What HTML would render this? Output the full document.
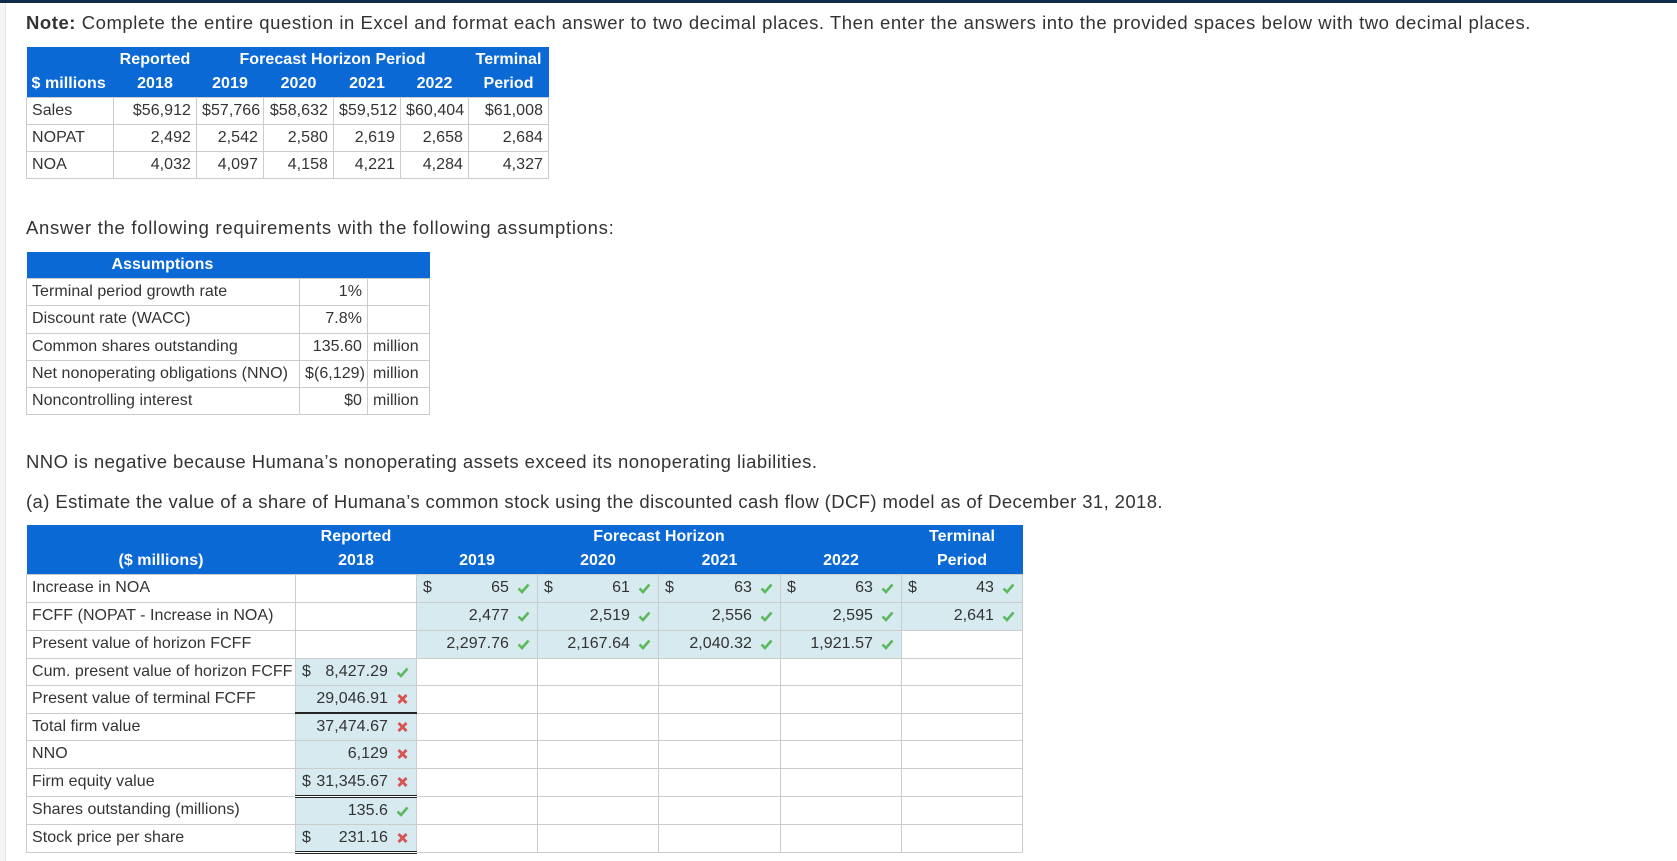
<!DOCTYPE html>
<html><head><meta charset="utf-8">
<style>
*{margin:0;padding:0;box-sizing:border-box}
body{width:1677px;height:861px;overflow:hidden;background:#fff;font-family:"Liberation Sans",sans-serif;color:#333;position:relative}
.top{position:absolute;left:0;top:0;width:1677px;height:3px;background:#0f2b4b}
.side{position:absolute;left:0;top:3px;width:6px;height:858px;background:#f4f5f7;border-right:1px solid #e2e4e8}
.t{position:absolute;white-space:nowrap}
table{position:absolute;border-collapse:collapse;table-layout:fixed;font-size:16px;letter-spacing:0.05px}
td{border:1px solid #ccc;padding:0 5px;white-space:nowrap;position:relative}
th{background:#0b69d6;color:#fff;font-weight:bold;padding:0 5px;white-space:nowrap;border:none}
.r{text-align:right}
.c{text-align:center}
.b{background:#d6eaf0}
.v{position:absolute;right:28px;top:50%;transform:translateY(-50%)}
.d{position:absolute;left:6px;top:50%;transform:translateY(-50%)}
.i{position:absolute;right:7px;top:50%;transform:translateY(-50%);width:13px;height:13px}
.ul{border-bottom:2px solid #222}
.dbl{border-bottom:3px double #222}
</style></head><body>
<div class="top"></div><div class="side"></div>
<div class="t" style="left:26px;top:12px;font-size:18.5px;letter-spacing:0.55px"><b>Note:</b> Complete the entire question in Excel and format each answer to two decimal places. Then enter the answers into the provided spaces below with two decimal places.</div>

<table style="left:26px;top:47px;width:522px">
<colgroup><col style="width:87px"><col style="width:83px"><col style="width:67px"><col style="width:70px"><col style="width:67px"><col style="width:68px"><col style="width:80px"></colgroup>
<tr style="height:25px"><th></th><th class="c">Reported</th><th colspan="4" class="c">Forecast Horizon Period</th><th class="c">Terminal</th></tr>
<tr style="height:25px"><th style="text-align:left">$ millions</th><th class="c">2018</th><th class="c">2019</th><th class="c">2020</th><th class="c">2021</th><th class="c">2022</th><th class="c">Period</th></tr>
<tr style="height:27px"><td>Sales</td><td class="r">$56,912</td><td class="r">$57,766</td><td class="r">$58,632</td><td class="r">$59,512</td><td class="r">$60,404</td><td class="r">$61,008</td></tr>
<tr style="height:27px"><td>NOPAT</td><td class="r">2,492</td><td class="r">2,542</td><td class="r">2,580</td><td class="r">2,619</td><td class="r">2,658</td><td class="r">2,684</td></tr>
<tr style="height:27px"><td>NOA</td><td class="r">4,032</td><td class="r">4,097</td><td class="r">4,158</td><td class="r">4,221</td><td class="r">4,284</td><td class="r">4,327</td></tr>
</table>

<div class="t" style="left:26px;top:217px;font-size:18.5px;letter-spacing:0.7px">Answer the following requirements with the following assumptions:</div>

<table style="left:26px;top:252px;width:403px">
<colgroup><col style="width:273px"><col style="width:68px"><col style="width:62px"></colgroup>
<tr style="height:26px"><th colspan="3" style="text-align:left;padding-left:85px">Assumptions</th></tr>
<tr style="height:27px"><td>Terminal period growth rate</td><td class="r">1%</td><td></td></tr>
<tr style="height:28px"><td>Discount rate (WACC)</td><td class="r">7.8%</td><td></td></tr>
<tr style="height:27px"><td>Common shares outstanding</td><td class="r">135.60</td><td>million</td></tr>
<tr style="height:27px"><td>Net nonoperating obligations (NNO)</td><td class="r">$(6,129)</td><td>million</td></tr>
<tr style="height:27px"><td>Noncontrolling interest</td><td class="r">$0</td><td>million</td></tr>
</table>

<div class="t" style="left:26px;top:451px;font-size:18.5px;letter-spacing:0.45px">NNO is negative because Humana’s nonoperating assets exceed its nonoperating liabilities.</div>
<div class="t" style="left:26px;top:491px;font-size:18.5px;letter-spacing:0.4px">(a) Estimate the value of a share of Humana’s common stock using the discounted cash flow (DCF) model as of December 31, 2018.</div>

<svg width="0" height="0" style="position:absolute"><defs>
<symbol id="ck" viewBox="0 0 13 13"><path d="M1.5 7 L5 10.5 L11.5 3" fill="none" stroke="#5cb85c" stroke-width="2.6"/></symbol>
<symbol id="x" viewBox="0 0 13 13"><path d="M2.5 2.5 L10.5 10.5 M10.5 2.5 L2.5 10.5" fill="none" stroke="#d9534f" stroke-width="2.8"/></symbol>
</defs></svg>

<table style="left:26px;top:525px;width:996px">
<colgroup><col style="width:269px"><col style="width:121px"><col style="width:121px"><col style="width:121px"><col style="width:122px"><col style="width:121px"><col style="width:121px"></colgroup>
<tr style="height:24px"><th></th><th class="c">Reported</th><th colspan="4" class="c">Forecast Horizon</th><th class="c">Terminal</th></tr>
<tr style="height:25px"><th class="c">($ millions)</th><th class="c">2018</th><th class="c">2019</th><th class="c">2020</th><th class="c">2021</th><th class="c">2022</th><th class="c">Period</th></tr>
<tr style="height:28px"><td>Increase in NOA</td><td></td>
<td class="b"><span class="d">$</span><span class="v">65</span><svg class="i"><use href="#ck"/></svg></td>
<td class="b"><span class="d">$</span><span class="v">61</span><svg class="i"><use href="#ck"/></svg></td>
<td class="b"><span class="d">$</span><span class="v">63</span><svg class="i"><use href="#ck"/></svg></td>
<td class="b"><span class="d">$</span><span class="v">63</span><svg class="i"><use href="#ck"/></svg></td>
<td class="b"><span class="d">$</span><span class="v">43</span><svg class="i"><use href="#ck"/></svg></td></tr>
<tr style="height:28px"><td>FCFF (NOPAT - Increase in NOA)</td><td></td>
<td class="b"><span class="v">2,477</span><svg class="i"><use href="#ck"/></svg></td>
<td class="b"><span class="v">2,519</span><svg class="i"><use href="#ck"/></svg></td>
<td class="b"><span class="v">2,556</span><svg class="i"><use href="#ck"/></svg></td>
<td class="b"><span class="v">2,595</span><svg class="i"><use href="#ck"/></svg></td>
<td class="b"><span class="v">2,641</span><svg class="i"><use href="#ck"/></svg></td></tr>
<tr style="height:28px"><td>Present value of horizon FCFF</td><td></td>
<td class="b"><span class="v">2,297.76</span><svg class="i"><use href="#ck"/></svg></td>
<td class="b"><span class="v">2,167.64</span><svg class="i"><use href="#ck"/></svg></td>
<td class="b"><span class="v">2,040.32</span><svg class="i"><use href="#ck"/></svg></td>
<td class="b"><span class="v">1,921.57</span><svg class="i"><use href="#ck"/></svg></td>
<td></td></tr>
<tr style="height:27px"><td>Cum. present value of horizon FCFF</td>
<td class="b"><span class="d">$</span><span class="v">8,427.29</span><svg class="i"><use href="#ck"/></svg></td><td></td><td></td><td></td><td></td><td></td></tr>
<tr style="height:28px"><td>Present value of terminal FCFF</td>
<td class="b ul"><span class="v">29,046.91</span><svg class="i"><use href="#x"/></svg></td><td></td><td></td><td></td><td></td><td></td></tr>
<tr style="height:27px"><td>Total firm value</td>
<td class="b"><span class="v">37,474.67</span><svg class="i"><use href="#x"/></svg></td><td></td><td></td><td></td><td></td><td></td></tr>
<tr style="height:28px"><td>NNO</td>
<td class="b"><span class="v">6,129</span><svg class="i"><use href="#x"/></svg></td><td></td><td></td><td></td><td></td><td></td></tr>
<tr style="height:28px"><td>Firm equity value</td>
<td class="b dbl"><span class="d">$</span><span class="v">31,345.67</span><svg class="i"><use href="#x"/></svg></td><td></td><td></td><td></td><td></td><td></td></tr>
<tr style="height:28px"><td>Shares outstanding (millions)</td>
<td class="b"><span class="v">135.6</span><svg class="i"><use href="#ck"/></svg></td><td></td><td></td><td></td><td></td><td></td></tr>
<tr style="height:28px"><td>Stock price per share</td>
<td class="b dbl"><span class="d">$</span><span class="v">231.16</span><svg class="i"><use href="#x"/></svg></td><td></td><td></td><td></td><td></td><td></td></tr>
</table>
</body></html>
